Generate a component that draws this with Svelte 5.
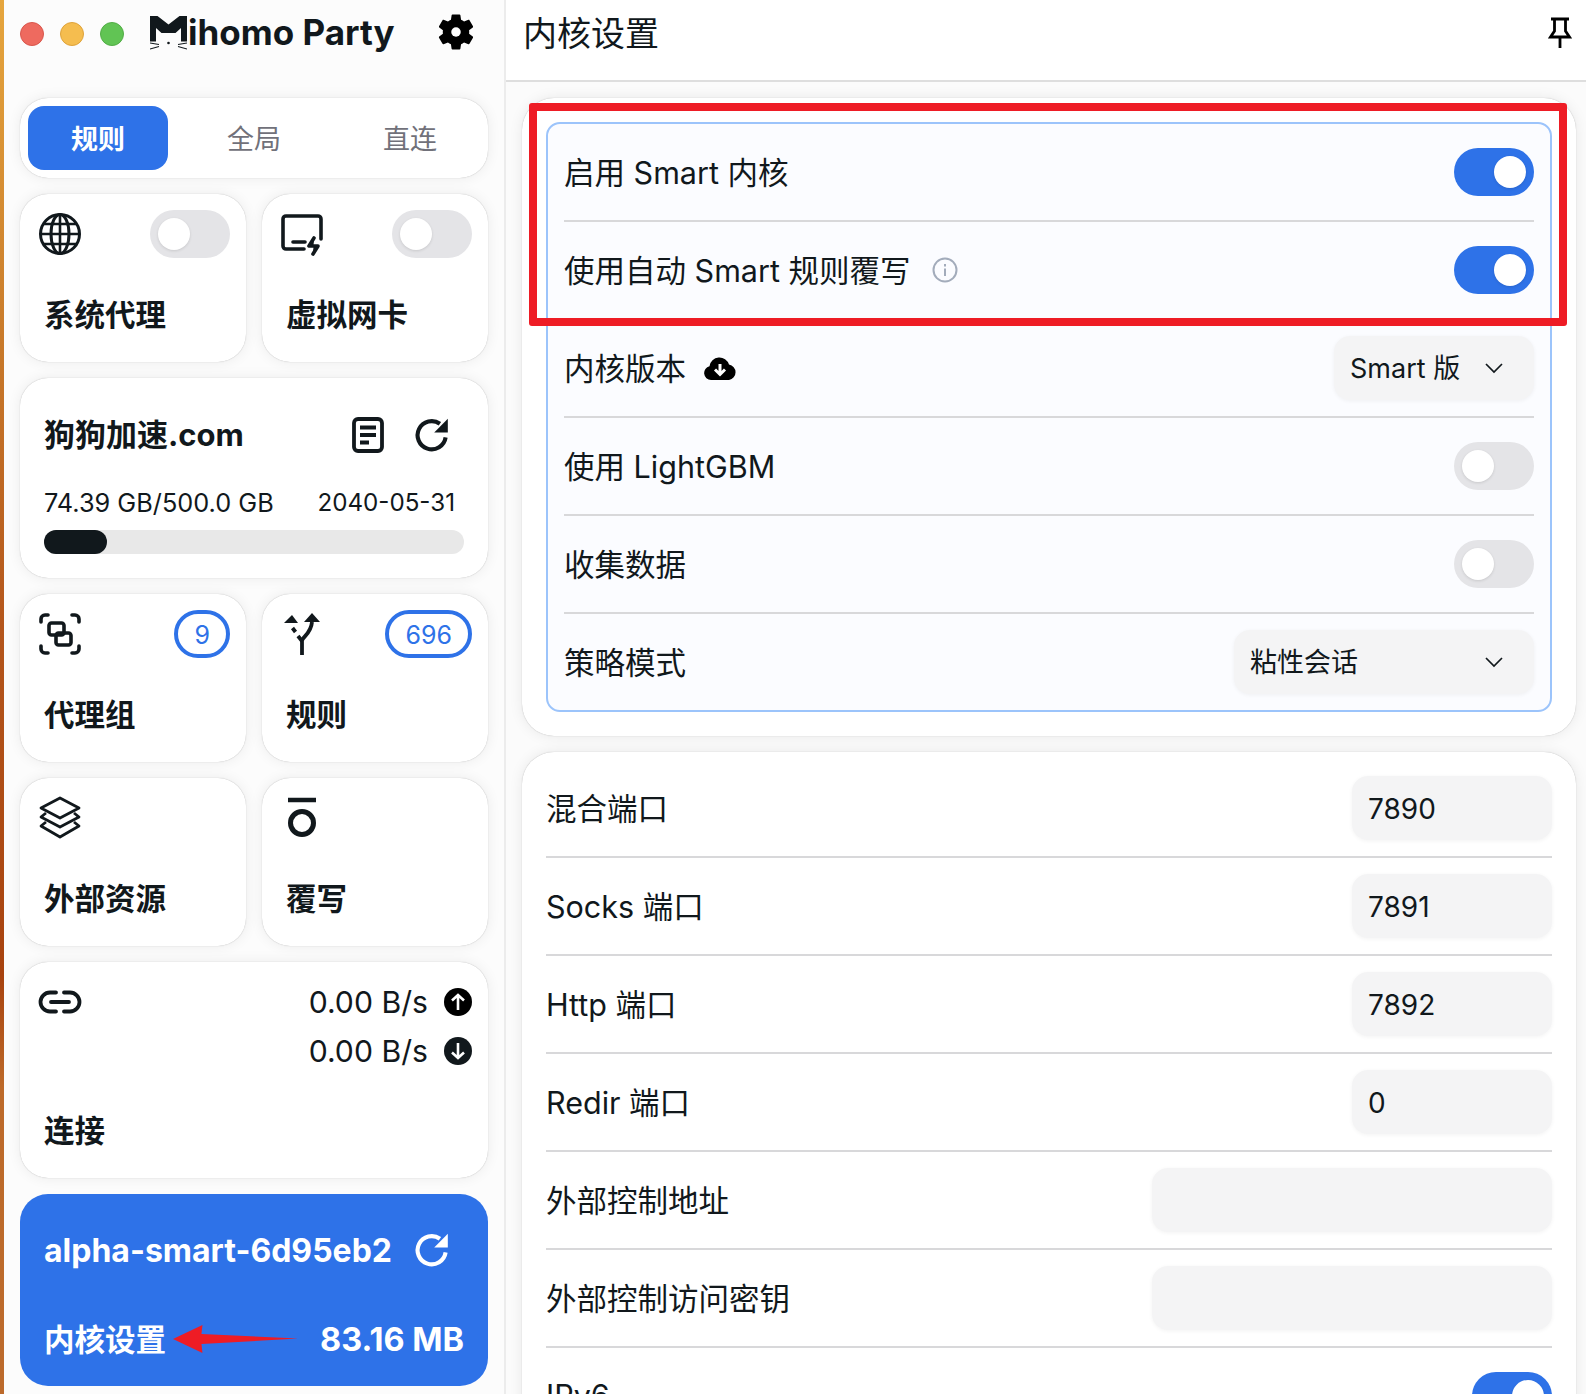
<script>
	const coreRows = [
		{ label: '启用 Smart 内核', kind: 'toggle', on: true },
		{ label: '使用自动 Smart 规则覆写', kind: 'toggle', on: true, info: true },
		{ label: '内核版本', kind: 'select', value: 'Smart 版', cloud: true },
		{ label: '使用 LightGBM', kind: 'toggle', on: false },
		{ label: '收集数据', kind: 'toggle', on: false },
		{ label: '策略模式', kind: 'select', value: '粘性会话', wide: true }
	];

	const portRows = [
		{ label: '混合端口', value: '7890' },
		{ label: 'Socks 端口', value: '7891' },
		{ label: 'Http 端口', value: '7892' },
		{ label: 'Redir 端口', value: '0' },
		{ label: '外部控制地址', value: '', wide: true },
		{ label: '外部控制访问密钥', value: '', wide: true }
	];
</script>

{#snippet refresh()}
	<svg class="refresh" viewBox="0 0 24 24" fill="none" stroke="currentColor">
		<path d="M20.6 13.5A8.9 8.9 0 1 1 17 4.9" stroke-width="2.600" />
		<path d="M22 1.800v8.600h-8.600z" fill="currentColor" stroke="none" />
	</svg>
{/snippet}

{#snippet chevron()}
	<svg class="chevron" viewBox="0 0 20 12" fill="none" stroke="#11181c" stroke-width="1.700">
		<path d="M2 2l8 8 8-8" />
	</svg>
{/snippet}

<div class="window">
	<div class="wallpaper"></div>

	<aside class="sidebar">
		<header class="side-head">
			<span class="light red"></span>
			<span class="light yellow"></span>
			<span class="light green"></span>
			<div class="logo">
				<svg class="logo-mark" viewBox="0 0 37 35">
					<path d="M0 1h7.500l11 8.500 11-8.500h7.500v25.500h-6V13l-5.500 5h-14L6 13v13.500H0z" fill="#11181c" />
					<circle cx="18.500" cy="28" r="1.300" fill="#11181c" />
					<path d="M0 28l9 1.500M0 34l9-2.500M37 28l-9 1.500M37 34l-9-2.500" stroke="#11181c" stroke-width="1.100" fill="none" />
				</svg>
				<span class="logo-text">ihomo Party</span>
			</div>
			<svg class="gear" viewBox="0 0 24 24">
				<path d="M19.140 12.940c.04-.3.06-.61.06-.94 0-.32-.02-.64-.07-.94l2.030-1.580c.18-.14.23-.41.12-.61l-1.920-3.320c-.12-.22-.37-.29-.59-.22l-2.390.96c-.5-.38-1.030-.7-1.620-.94l-.36-2.540c-.04-.24-.24-.41-.48-.41h-3.840c-.24 0-.43.17-.47.41l-.36 2.540c-.59.24-1.130.57-1.620.94l-2.390-.96c-.22-.08-.47 0-.59.22L2.740 8.870c-.12.21-.08.47.12.61l2.030 1.580c-.05.3-.09.63-.09.94s.02.64.07.94l-2.030 1.580c-.18.14-.23.41-.12.61l1.920 3.320c.12.22.37.29.59.22l2.390-.96c.5.38 1.030.7 1.620.94l.36 2.540c.05.24.24.41.48.41h3.840c.24 0 .44-.17.47-.41l.36-2.540c.59-.24 1.130-.56 1.620-.94l2.390.96c.22.08.47 0 .59-.22l1.920-3.320c.12-.22.07-.47-.12-.61l-2.010-1.580z" fill="#000" />
				<circle cx="12" cy="12" r="2.600" fill="#fff" />
			</svg>
		</header>

		<div class="stack">
			<div class="card tabs">
				<span class="tab active">规则</span>
				<span class="tab">全局</span>
				<span class="tab">直连</span>
			</div>

			<div class="pair">
				<div class="card tile">
					<div class="tile-top">
						<svg class="icon" viewBox="0 0 44 44" fill="none" stroke="#11181c" stroke-width="3">
							<circle cx="22" cy="22" r="19.500" />
							<ellipse cx="22" cy="22" rx="9" ry="19.500" />
							<path d="M22 2.500v39M2.500 22h39M5.500 12h33M5.500 32h33" stroke-width="2.600" />
						</svg>
						<span class="switch"><span class="knob"></span></span>
					</div>
					<div class="tile-label">系统代理</div>
				</div>
				<div class="card tile">
					<div class="tile-top">
						<svg class="icon" viewBox="0 0 44 44" fill="none" stroke="#11181c" stroke-width="3.600" stroke-linecap="round" stroke-linejoin="round">
							<path d="M24 37H6a3 3 0 0 1-3-3V7a3 3 0 0 1 3-3h32a3 3 0 0 1 3 3v20" />
							<path d="M13 30h12" />
							<path d="M34 26l-5 8h9l-5 8" fill="#11181c" />
						</svg>
						<span class="switch"><span class="knob"></span></span>
					</div>
					<div class="tile-label">虚拟网卡</div>
				</div>
			</div>

			<div class="card profile">
				<div class="profile-head">
					<span class="profile-name">狗狗加速.com</span>
					<svg class="doc" viewBox="0 0 32 36" fill="none" stroke="#11181c" stroke-width="3.800">
						<rect x="2" y="2" width="28" height="32" rx="4" />
						<path d="M8 10.500h16M8 18h16M8 25.500h9" />
					</svg>
					{@render refresh()}
				</div>
				<div class="usage">
					<span>74.39 GB/500.0 GB</span>
					<span class="date">2040-05-31</span>
				</div>
				<div class="bar"><div class="fill" style="width: 15%"></div></div>
			</div>

			<div class="pair">
				<div class="card tile">
					<div class="tile-top">
						<svg class="icon" viewBox="0 0 44 44" fill="none" stroke="#11181c" stroke-width="3.600" stroke-linecap="round" stroke-linejoin="round">
							<path d="M3 10V7a4 4 0 0 1 4-4h3M34 3h3a4 4 0 0 1 4 4v3M41 34v3a4 4 0 0 1-4 4h-3M10 41H7a4 4 0 0 1-4-4v-3" />
							<rect x="11" y="11" width="15" height="12" rx="2.500" />
							<rect x="18" y="21" width="15" height="12" rx="2.500" />
						</svg>
						<span class="badge">9</span>
					</div>
					<div class="tile-label">代理组</div>
				</div>
				<div class="card tile">
					<div class="tile-top">
						<svg class="icon" viewBox="0 0 44 44" fill="none" stroke="#11181c" stroke-width="3.800">
							<path d="M22 43V29c0-4 9-7 10-19" />
							<path d="M22 29l-4-5M15.500 20l-3-4" />
							<path d="M24 10l8-9 8 9zM4 11l8-8 6 8z" fill="#11181c" stroke="none" />
						</svg>
						<span class="badge">696</span>
					</div>
					<div class="tile-label">规则</div>
				</div>
			</div>

			<div class="pair">
				<div class="card tile">
					<div class="tile-top">
						<svg class="icon" viewBox="0 0 44 44" fill="none" stroke="#11181c" stroke-width="2.800" stroke-linejoin="round">
							<path d="M22 2L41 12 22 22 3 12z" />
							<path d="M8 17L3 21l19 10 19-10-5-4" />
							<path d="M8 26l-5 4 19 11 19-11-5-4" />
						</svg>
					</div>
					<div class="tile-label">外部资源</div>
				</div>
				<div class="card tile">
					<div class="tile-top">
						<svg class="icon" viewBox="0 0 44 44" fill="none" stroke="#11181c">
							<path d="M8 4h28" stroke-width="4.500" />
							<circle cx="22" cy="27" r="11.500" stroke-width="5" />
						</svg>
					</div>
					<div class="tile-label">覆写</div>
				</div>
			</div>

			<div class="card tile conn">
				<div class="conn-top">
					<svg class="icon" viewBox="0 0 44 26" fill="none" stroke="#11181c" stroke-width="3.800" stroke-linecap="round">
						<path d="M18 3.500h-6a9.500 9.500 0 0 0 0 19h6M26 3.500h6a9.500 9.500 0 0 1 0 19h-6M13 13h18" />
					</svg>
					<div class="speeds">
						<div class="speed">
							<span>0.00 B/s</span>
							<svg class="arrow" viewBox="0 0 28 28">
								<circle cx="14" cy="14" r="14" fill="#000" />
								<path d="M14 22V7M8 12.500L14 7l6 5.500" stroke="#fff" stroke-width="2.600" fill="none" />
							</svg>
						</div>
						<div class="speed">
							<span>0.00 B/s</span>
							<svg class="arrow" viewBox="0 0 28 28">
								<circle cx="14" cy="14" r="14" fill="#11181c" />
								<path d="M14 6v15M8 15.500l6 5.500 6-5.500" stroke="#fff" stroke-width="2.600" fill="none" />
							</svg>
						</div>
					</div>
				</div>
				<div class="tile-label conn-label">连接</div>
			</div>

			<div class="core">
				<div class="core-row">
					<span>alpha-smart-6d95eb2</span>
					{@render refresh()}
				</div>
				<div class="core-row second">
					<span class="core-name">内核设置</span>
					<span class="core-mem">83.16 MB</span>
				</div>
				<svg class="red-arrow" viewBox="0 0 124 30" preserveAspectRatio="none">
					<path d="M0 15L29 1l-1 9 95 4.500L28 20l1 9z" fill="#ee1c25" />
				</svg>
			</div>
		</div>
	</aside>

	<main class="content">
		<header class="top">
			<h1>内核设置</h1>
			<svg class="pin" viewBox="0 0 24 32" fill="none" stroke="#000" stroke-width="2.800">
				<path d="M3 2h18M6.500 2v12L2.500 20h19l-4-6V2M12 20v11" />
			</svg>
		</header>

		<div class="panel">
			<section class="settings">
				<div class="highlight">
					{#each coreRows as row, i}
						{#if i > 0}<hr />{/if}
						<div class="row">
							<span class="label">
								<span>{row.label}</span>
								{#if row.info}
									<svg class="info" viewBox="0 0 26 26" fill="none" stroke="#a3acbb" stroke-width="2">
										<circle cx="13" cy="13" r="11.500" />
										<path d="M13 11.500v7.500M13 7v2.500" />
									</svg>
								{/if}
								{#if row.cloud}
									<svg class="cloud" viewBox="0 0 34 24">
										<path d="M8 23a7 7 0 0 1-1.500-13.800A10 10 0 0 1 26 7.600 7.800 7.800 0 0 1 26 23z" fill="#000" />
										<path d="M17 7v10M12 12.500l5 5 5-5" stroke="#fff" stroke-width="3" fill="none" />
									</svg>
								{/if}
							</span>
							{#if row.kind === 'toggle'}
								<span class="switch" class:on={row.on}><span class="knob"></span></span>
							{:else}
								<span class="field select" class:mid={row.wide}>
									<span class="select-value">{row.value}</span>
									{@render chevron()}
								</span>
							{/if}
						</div>
					{/each}
				</div>
			</section>

			<section class="settings ports">
				{#each portRows as row}
					<div class="row">
						<span class="label">{row.label}</span>
						<span class="field input" class:long={row.wide}>{row.value}</span>
					</div>
					<hr />
				{/each}
				<div class="row">
					<span class="label">IPv6</span>
					<span class="switch on"><span class="knob"></span></span>
				</div>
			</section>
		</div>

		<div class="red-box"></div>
	</main>
</div>

<style>
	:global(*, *::before, *::after) {
		box-sizing: border-box;
		margin: 0;
		padding: 0;
	}

	:global(body) {
		font-family: Inter, 'Noto Sans CJK SC', sans-serif;
		color: #11181c;
		background: #fff;
	}

	.window {
		display: flex;
		width: 1586px;
		height: 1394px;
		overflow: hidden;
	}

	.wallpaper {
		width: 4px;
		flex-shrink: 0;
		background: linear-gradient(180deg, #e6a63e 0%, #c8792a 25%, #b4561c 45%, #a8430f 70%, #bd6a2a 78%, #bc6a2c 100%);
	}

	.sidebar {
		width: 502px;
		flex-shrink: 0;
		padding: 0 16px;
		background: #fcfcfc;
		border-right: 2px solid #ececec;
	}

	.side-head {
		display: flex;
		align-items: center;
		gap: 16px;
		height: 68px;
		margin-bottom: 30px;
	}

	.light {
		width: 24px;
		height: 24px;
		border-radius: 50%;
	}

	.red {
		background: #ee6a5f;
		border: 1px solid #d9564c;
	}

	.yellow {
		background: #f5bd4f;
		border: 1px solid #dfa33a;
	}

	.green {
		background: #61c454;
		border: 1px solid #52ad46;
	}

	.logo {
		display: flex;
		align-items: flex-start;
		margin-left: 10px;
		height: 36px;
	}

	.logo-mark {
		width: 37px;
		height: 35px;
		flex-shrink: 0;
		margin-top: -1px;
	}

	.logo-text {
		font-size: 35px;
		line-height: 36px;
		font-weight: 700;
		margin: -2px 0 0 1px;
	}

	.gear {
		width: 44px;
		height: 44px;
		margin-left: auto;
		margin-right: 10px;
		margin-bottom: 4px;
	}

	.stack {
		display: flex;
		flex-direction: column;
		gap: 16px;
	}

	.pair {
		display: grid;
		grid-template-columns: 226px 226px;
		gap: 16px;
	}

	.card {
		background: #fff;
		border-radius: 28px;
		box-shadow: 0 0 14px rgba(0, 0, 0, 0.07), 0 0 1px rgba(0, 0, 0, 0.3);
	}

	.tabs {
		display: grid;
		grid-template-columns: repeat(3, 1fr);
		height: 80px;
		align-items: center;
	}

	.tab {
		height: 64px;
		margin: 0 8px;
		line-height: 68px;
		border-radius: 16px;
		text-align: center;
		font-size: 27px;
		color: #71717a;
	}

	.tab.active {
		background: #2e72e8;
		color: #fff;
		font-weight: 700;
	}

	.tile {
		height: 168px;
	}

	.tile-top {
		display: flex;
		align-items: center;
		justify-content: space-between;
		height: 48px;
		margin: 16px 16px 0 18px;
	}

	.icon {
		width: 44px;
		height: 44px;
		flex-shrink: 0;
	}

	.tile-label {
		margin: 37px 0 0 24px;
		font-size: 30.500px;
		line-height: 40px;
		font-weight: 700;
	}

	.switch {
		display: flex;
		align-items: center;
		width: 80px;
		height: 48px;
		padding: 0 8px;
		border-radius: 24px;
		background: #e4e4e7;
		flex-shrink: 0;
	}

	.switch.on {
		justify-content: flex-end;
		background: #2e72e8;
	}

	.knob {
		width: 32px;
		height: 32px;
		border-radius: 50%;
		background: #fff;
		box-shadow: 0 1px 3px rgba(0, 0, 0, 0.12);
	}

	.profile {
		height: 200px;
		padding: 33px 24px 0;
	}

	.profile-head {
		display: flex;
		align-items: center;
		height: 48px;
	}

	.profile-name {
		font-size: 31px;
		font-weight: 700;
		margin-right: auto;
		margin-bottom: 6px;
	}

	.doc {
		width: 32px;
		height: 36px;
		margin-right: 29px;
	}

	.refresh {
		width: 38px;
		height: 38px;
		margin-right: 13px;
		flex-shrink: 0;
	}

	.usage {
		display: flex;
		align-items: center;
		justify-content: space-between;
		padding-right: 9px;
		margin-top: 26px;
		margin-bottom: -1px;
		font-size: 25.300px;
		line-height: 36px;
	}

	.date {
		font-size: 24.200px;
	}

	.bar {
		height: 24px;
		margin-top: 10px;
		border-radius: 12px;
		background: #e8e8e8;
	}

	.fill {
		height: 100%;
		border-radius: 12px;
		background: #11181c;
	}

	.badge {
		display: flex;
		align-items: center;
		justify-content: center;
		min-width: 54px;
		height: 48px;
		padding: 1px 16px 0;
		border: 4px solid #2e72e8;
		border-radius: 24px;
		color: #2e72e8;
		font-size: 25px;
	}

	.conn {
		height: 216px;
	}

	.conn-top {
		display: flex;
		justify-content: space-between;
		margin: 16px 16px 0 18px;
	}

	.conn-top .icon {
		height: 26px;
		margin-top: 11px;
	}

	.speeds {
		display: flex;
		flex-direction: column;
		gap: 1px;
	}

	.speed {
		display: flex;
		align-items: center;
		gap: 16px;
		height: 48px;
		font-size: 30.200px;
	}

	.arrow {
		width: 28px;
		height: 28px;
	}

	.conn-label {
		margin-top: 36px;
	}

	.core {
		position: relative;
		height: 192px;
		padding: 32px 24px 0;
		border-radius: 28px;
		background: #2e72e8;
		color: #fff;
	}

	.core-row {
		display: flex;
		align-items: center;
		justify-content: space-between;
		height: 48px;
		font-size: 32px;
		font-weight: 700;
	}

	.core-row.second {
		margin-top: 41px;
	}

	.core-name {
		font-size: 30.500px;
		margin-bottom: 2px;
	}

	.core-mem {
		font-size: 32.500px;
	}

	.red-arrow {
		position: absolute;
		left: 153px;
		top: 130px;
		width: 126px;
		height: 30px;
	}

	.content {
		position: relative;
		flex: 1;
		min-width: 0;
		background: #fbfbfb;
	}

	.top {
		display: flex;
		align-items: center;
		justify-content: space-between;
		height: 82px;
		padding: 0 14px 14px 17px;
		background: #fff;
		border-bottom: 2px solid #dedede;
	}

	h1 {
		font-size: 34px;
		font-weight: 400;
		margin-bottom: 4px;
	}

	.pin {
		width: 24px;
		height: 32px;
	}

	.panel {
		display: flex;
		flex-direction: column;
		gap: 16px;
		padding: 16px 10px 0 16px;
	}

	.settings {
		padding: 24px;
		border-radius: 32px;
		background: #fff;
		box-shadow: 0 0 14px rgba(0, 0, 0, 0.08), 0 0 1px rgba(0, 0, 0, 0.3);
	}

	.highlight {
		padding: 0 16px;
		border: 2px solid #9cc4fb;
		border-radius: 14px;
		background: #fbfcff;
	}

	.ports {
		padding: 8px 24px 0;
	}

	hr {
		border: none;
		height: 2px;
		background: #d8d8da;
	}

	.row {
		display: flex;
		align-items: center;
		justify-content: space-between;
		height: 96px;
	}

	.label {
		display: flex;
		align-items: center;
		font-size: 30.500px;
		padding-bottom: 2px;
	}

	.info {
		width: 26px;
		height: 26px;
		margin-left: 21px;
		margin-top: 2px;
	}

	.cloud {
		width: 34px;
		height: 24px;
		margin-left: 17px;
		margin-top: 3px;
	}

	.field {
		display: flex;
		align-items: center;
		justify-content: space-between;
		width: 200px;
		height: 64px;
		padding: 0 16px;
		border-radius: 16px;
		background: #f4f4f5;
		box-shadow: 0 1px 4px rgba(0, 0, 0, 0.05);
		font-size: 28px;
		color: #11181c;
	}

	.field.input {
		padding-top: 2px;
	}

	.field.select {
		font-size: 27px;
	}

	.select-value {
		margin-bottom: 3px;
	}

	.field.mid {
		width: 300px;
	}

	.field.long {
		width: 400px;
	}

	.chevron {
		width: 20px;
		height: 12px;
		margin-right: 14px;
	}

	.red-box {
		position: absolute;
		left: 23px;
		top: 103px;
		width: 1038px;
		height: 223px;
		border: 8px solid #ee1c25;
		border-radius: 3px;
	}
</style>
